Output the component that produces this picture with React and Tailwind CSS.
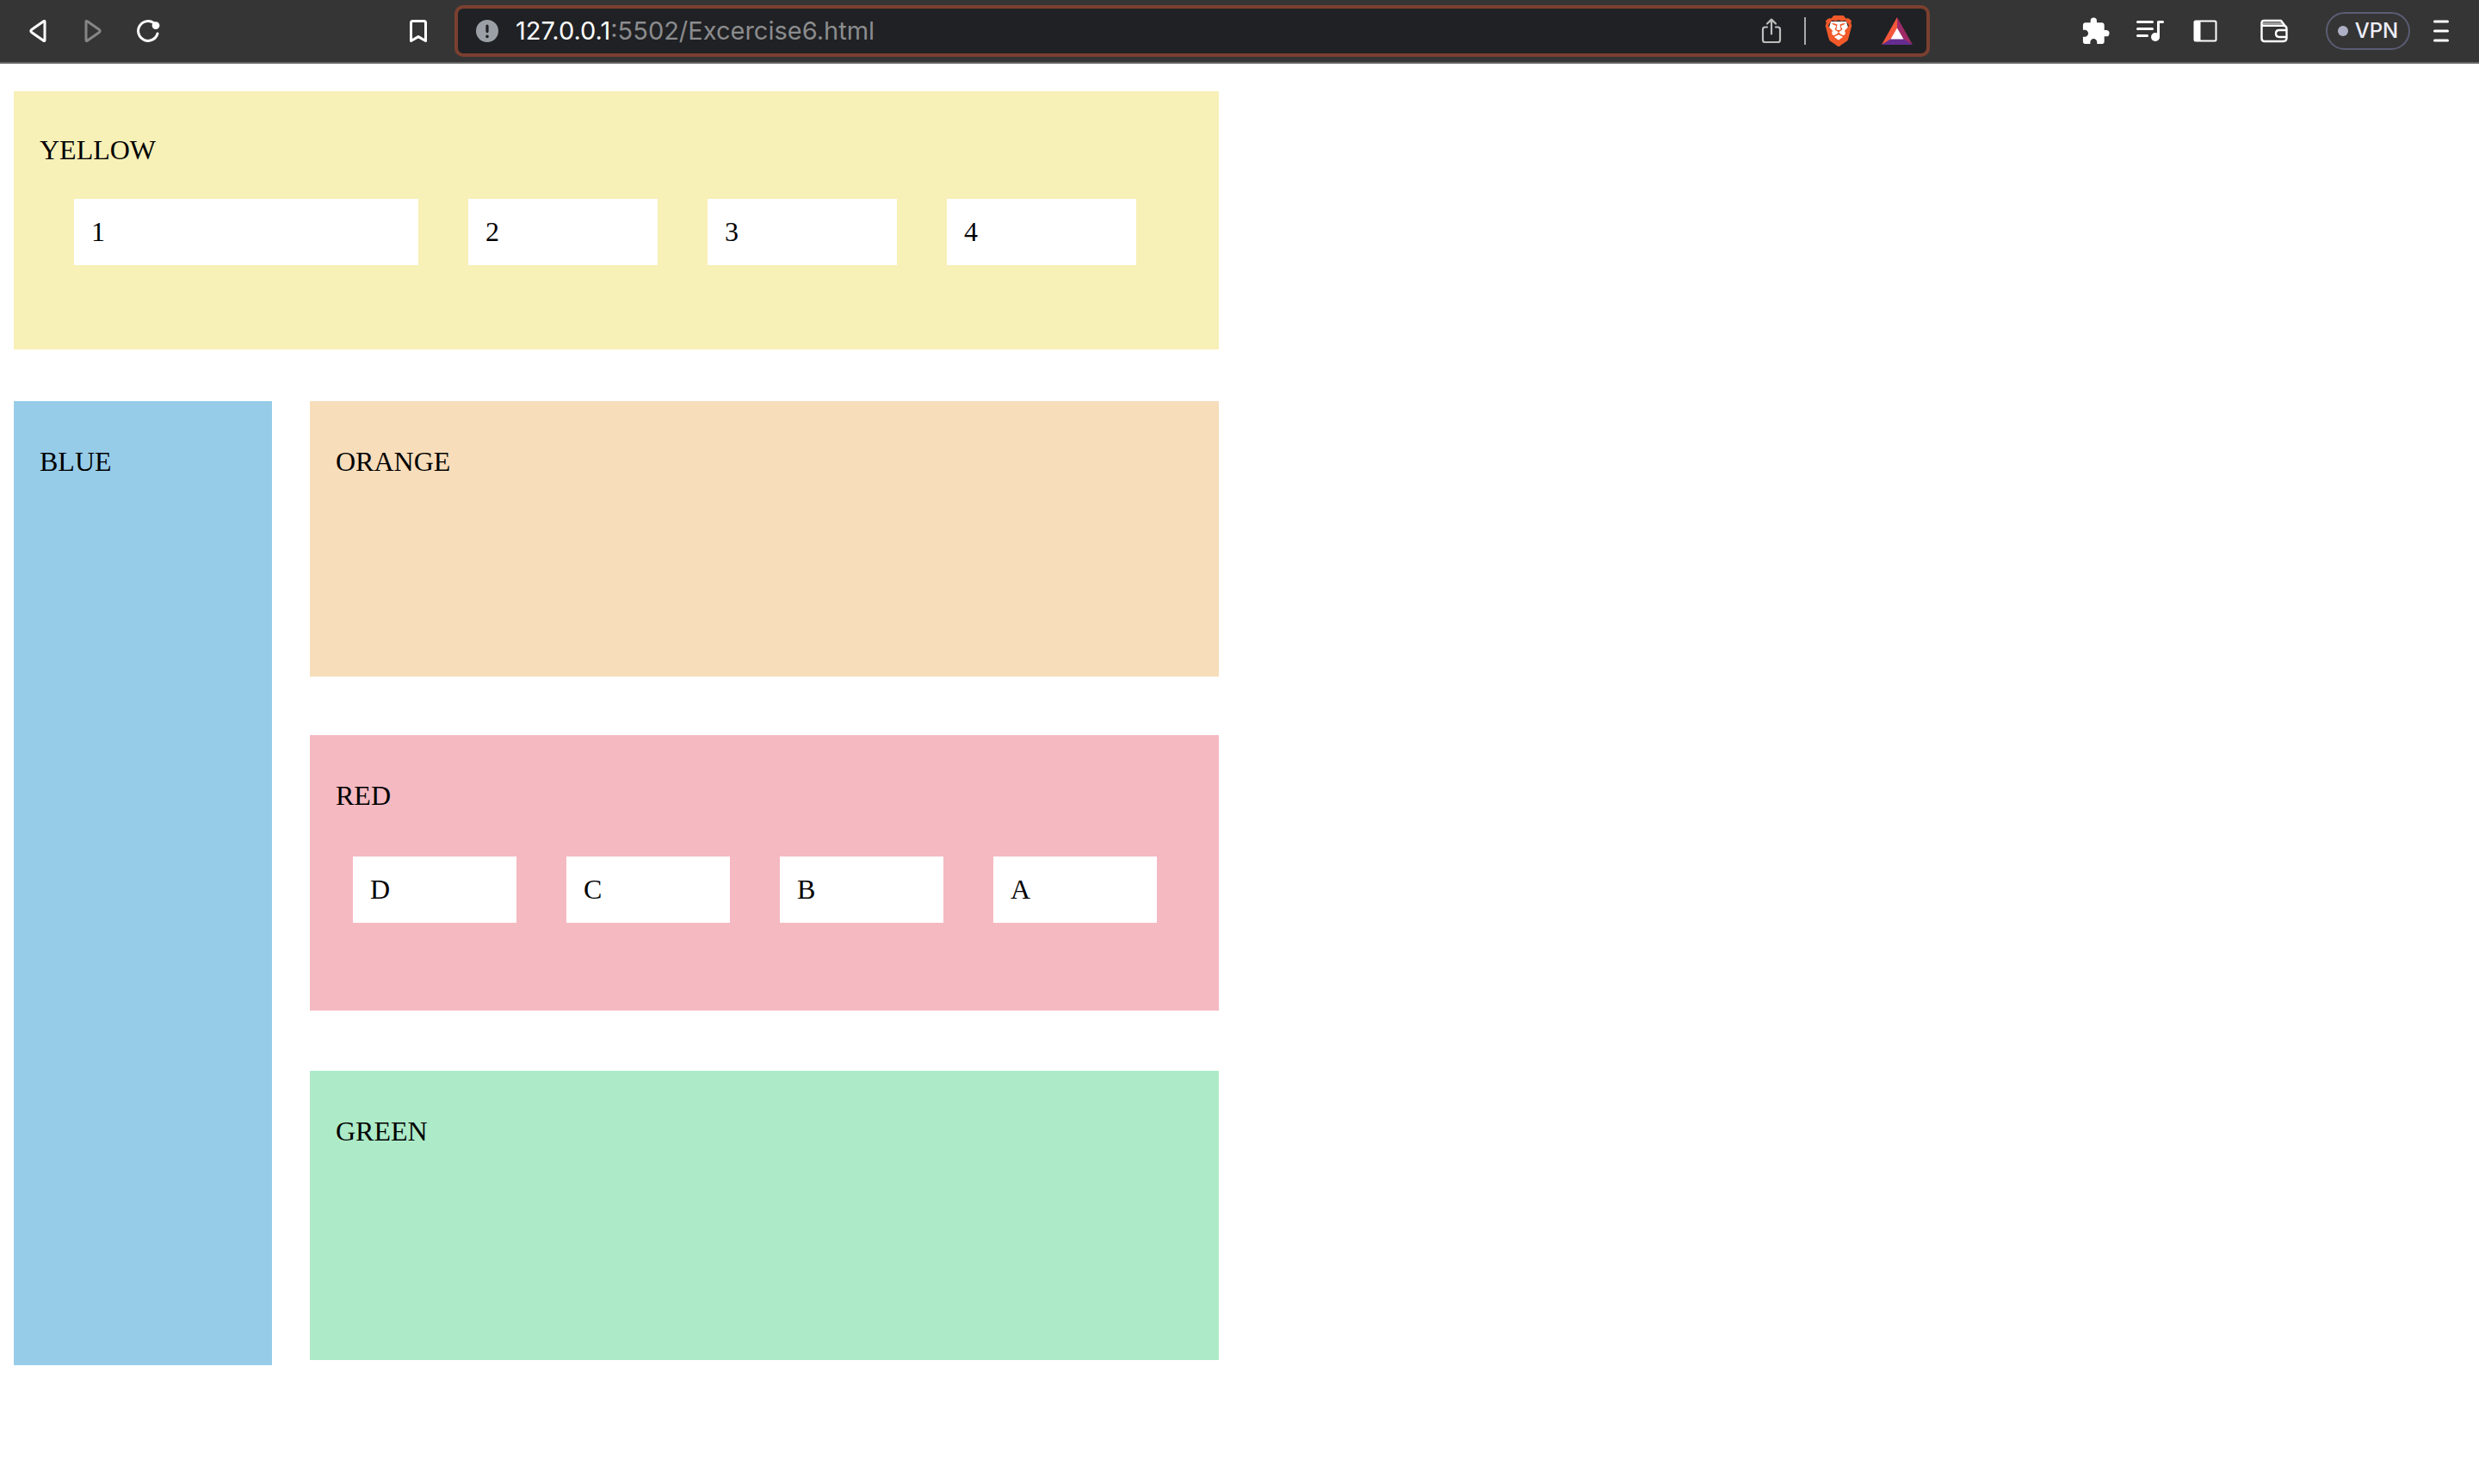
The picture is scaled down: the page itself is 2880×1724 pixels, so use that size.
import { SiBrave } from "react-icons/si";
import { MdExtension } from "react-icons/md";

function IconButton({ label, children, className = "" }) {
  return (
    <button
      type="button"
      aria-label={label}
      className={`flex size-10 shrink-0 items-center justify-center ${className}`}
    >
      {children}
    </button>
  );
}

function BackIcon() {
  return (
    <svg width="20" height="28" viewBox="0 0 20 28" fill="none" stroke="currentColor" strokeWidth="3" strokeLinejoin="round">
      <path d="M18 3.4V24.6Q18 26.2 16.6 25.2L2.6 15.4Q1 14 2.6 12.6L16.6 2.8Q18 1.8 18 3.4Z" />
    </svg>
  );
}

function ForwardIcon() {
  return (
    <svg width="20" height="28" viewBox="0 0 20 28" fill="none" stroke="currentColor" strokeWidth="3" strokeLinejoin="round">
      <path d="M2 3.4V24.6Q2 26.2 3.4 25.2L17.4 15.4Q19 14 17.4 12.6L3.4 2.8Q2 1.8 2 3.4Z" />
    </svg>
  );
}

function ReloadIcon() {
  return (
    <svg width="28" height="28" viewBox="0 0 28 28" fill="none" stroke="currentColor" strokeWidth="3" strokeLinecap="round">
      <path d="M20.5 4.6A11.4 11.4 0 1 0 25 17" />
      <circle cx="23" cy="7.6" r="4.4" fill="currentColor" stroke="none" />
    </svg>
  );
}

function BookmarkIcon() {
  return (
    <svg width="22" height="28" viewBox="0 0 22 28" fill="none" stroke="currentColor" strokeWidth="3" strokeLinejoin="round">
      <path d="M2.5 4.5Q2.5 2.5 4.5 2.5H17.5Q19.5 2.5 19.5 4.5V25.5L11 20.6L2.5 25.5Z" />
    </svg>
  );
}

function InfoIcon() {
  return (
    <svg width="26" height="26" viewBox="0 0 26 26" className="shrink-0">
      <circle cx="13" cy="13" r="13" fill="#9aa0a6" />
      <path d="M13 7V13.6" stroke="#202124" strokeWidth="3.2" strokeLinecap="round" />
      <circle cx="13" cy="19.4" r="1.8" fill="#202124" />
    </svg>
  );
}

function ShareIcon() {
  return (
    <svg width="24" height="30" viewBox="0 0 24 30" fill="none" stroke="#bdbdbd" strokeWidth="2.2" strokeLinecap="round" strokeLinejoin="round">
      <path d="M7 10.5H4.6Q2 10.5 2 13.1V25.4Q2 28 4.6 28H19.4Q22 28 22 25.4V13.1Q22 10.5 19.4 10.5H17" />
      <path d="M12 18.5V2M7 6.5L12 1.6L17 6.5" />
    </svg>
  );
}

function BraveIcon() {
  return (
    <span className="relative flex size-9 items-center justify-center">
      <svg width="36" height="36" viewBox="0 0 36 36" className="absolute">
        <path d="M9 7H27L29 14L26 24L18 29L10 24L7 14Z" fill="#fff" />
      </svg>
      <SiBrave className="relative size-9 text-[#f1592a]" />
    </span>
  );
}

function RewardsIcon() {
  return (
    <svg width="36" height="32" viewBox="0 0 36 32">
      <path d="M18 0L0 32L11 26L18 13Z" fill="#f5573a" />
      <path d="M18 0L36 32L25 26L18 13Z" fill="#9e2a68" />
      <path d="M0 32H36L25 25H11Z" fill="#662d91" />
      <path d="M18 12.5L25.5 25.5H10.5Z" fill="#fff" />
    </svg>
  );
}

function PlaylistIcon() {
  return (
    <svg width="32" height="26" viewBox="0 0 32 26" fill="none" stroke="currentColor" strokeWidth="3" strokeLinecap="round">
      <path d="M1.5 2.5H18.5M1.5 10.5H18.5M1.5 18.5H12.5" />
      <path d="M25.5 20V2.5H30.5" strokeLinejoin="round" />
      <circle cx="22" cy="20" r="5" fill="currentColor" stroke="none" />
    </svg>
  );
}

function SidebarIcon() {
  return (
    <svg width="28" height="26" viewBox="0 0 28 26" fill="none" stroke="currentColor" strokeWidth="2">
      <rect x="1.5" y="1.5" width="25" height="23" rx="1.5" />
      <path d="M1 1.5H8.5V24.5H1Z" fill="currentColor" stroke="none" />
    </svg>
  );
}

function WalletIcon() {
  return (
    <svg width="34" height="28" viewBox="0 0 34 28" fill="none" stroke="currentColor" strokeWidth="2.4" strokeLinejoin="round">
      <path d="M2.5 5V22.5Q2.5 26 6 26H27.5Q31.5 26 31.5 22V11.5Q31.5 7.8 27.5 7.8H5Q2.5 7.8 2.5 5Q2.5 2 5.5 2H25L30 8.5" />
      <path d="M4 5H26" strokeWidth="1" />
      <path d="M31.5 13H23Q19 13 19 17Q19 21 23 21H31.5" />
    </svg>
  );
}

function MenuIcon() {
  return (
    <svg width="18" height="26" viewBox="0 0 18 26" fill="none" stroke="currentColor" strokeWidth="3" strokeLinecap="round">
      <path d="M1.5 2H16.5M1.5 13H16.5M1.5 24H16.5" />
    </svg>
  );
}

function Toolbar() {
  return (
    <header className="flex items-center border-b-2 border-[#646464] bg-[#353535] px-6 py-1.5 font-[Inter,sans-serif] text-white">
      <nav aria-label="History" className="flex gap-6">
        <IconButton label="Back"><BackIcon /></IconButton>
        <IconButton label="Forward" className="text-[#868686]"><ForwardIcon /></IconButton>
        <IconButton label="Reload"><ReloadIcon /></IconButton>
      </nav>
      <IconButton label="Bookmark this page" className="mr-[22px] ml-[274px]"><BookmarkIcon /></IconButton>

      <div className="flex h-[60px] min-w-0 flex-1 items-center rounded-[10px] border-4 border-[#7b4030] bg-[#202124] pr-4 pl-[21px]">
        <InfoIcon />
        <label htmlFor="address" className="ml-5 text-[29px] leading-8">127.0.0.1</label>
        <input
          id="address"
          type="text"
          defaultValue=":5502/Excercise6.html"
          className="min-w-0 flex-1 bg-transparent text-[29px] leading-8 text-[#8b8c8e] outline-none"
        />
        <button type="button" aria-label="Share" className="mr-[26px]"><ShareIcon /></button>
        <span className="h-8 w-0.5 bg-[#a9a9a9]" />
        <button type="button" aria-label="Shields" className="mr-8 ml-5"><BraveIcon /></button>
        <button type="button" aria-label="Rewards"><RewardsIcon /></button>
      </div>

      <div className="ml-[172px] flex items-center">
        <div className="flex gap-6">
          <IconButton label="Extensions"><MdExtension className="size-[35px]" /></IconButton>
          <IconButton label="Media controls"><PlaylistIcon /></IconButton>
          <IconButton label="Sidebar"><SidebarIcon /></IconButton>
        </div>
        <IconButton label="Wallet" className="mx-10"><WalletIcon /></IconButton>
        <button
          type="button"
          className="mr-4 flex h-11 w-[98px] items-center justify-center gap-2 rounded-full border-2 border-[#5b5d75] text-2xl font-medium text-[#edeef8]"
        >
          <span className="size-3 shrink-0 rounded-full bg-[#aeb0c5]" />
          VPN
        </button>
        <IconButton label="Menu"><MenuIcon /></IconButton>
      </div>
    </header>
  );
}

function Tile({ children }) {
  return <div className="bg-white p-5">{children}</div>;
}

export default function App() {
  return (
    <div className="min-h-screen bg-white">
      <Toolbar />
      <main className="box-content max-w-[1400px] px-4 py-8 font-['Liberation_Serif',serif] text-[32px] leading-[37px] text-black">
        <section className="bg-[#f7f0b7] pt-[50px] pr-24 pb-[98px] pl-[70px]">
          <h2 className="-ml-10">YELLOW</h2>
          <div className="mt-[38px] grid grid-cols-[20fr_11fr_11fr_11fr] gap-[58px]">
            {["1", "2", "3", "4"].map((name) => <Tile key={name}>{name}</Tile>)}
          </div>
        </section>

        <div className="mt-[60px] flex gap-11">
          <section className="w-[300px] shrink-0 bg-[#97cce8] px-[30px] pt-[52px]">
            <h2>BLUE</h2>
          </section>
          <div className="flex-1 pb-1.5">
            <section className="min-h-80 bg-[#f7ddba] px-[30px] pt-[52px]">
              <h2>ORANGE</h2>
            </section>
            <section className="mt-[68px] min-h-80 bg-[#f5b9c1] pt-[52px] pr-[72px] pl-[50px]">
              <h2 className="-ml-5">RED</h2>
              <div className="mt-[52px] grid grid-cols-4 gap-[58px]">
                {["D", "C", "B", "A"].map((name) => <Tile key={name}>{name}</Tile>)}
              </div>
            </section>
            <section className="mt-[70px] min-h-[336px] bg-[#adeac7] px-[30px] pt-[52px]">
              <h2>GREEN</h2>
            </section>
          </div>
        </div>
      </main>
    </div>
  );
}
